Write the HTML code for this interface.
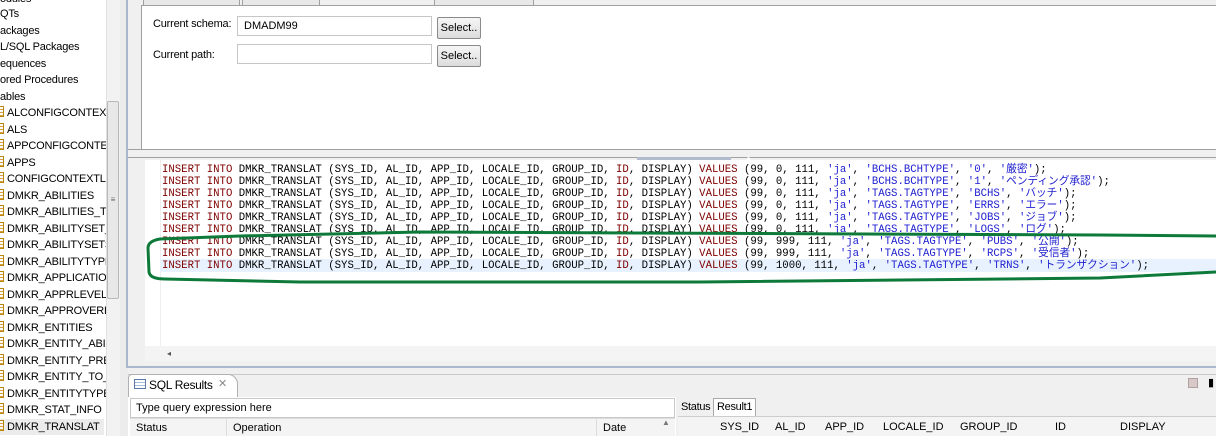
<!DOCTYPE html>
<html><head><meta charset="utf-8"><style>
*{margin:0;padding:0;box-sizing:border-box}
body{width:1216px;height:436px;overflow:hidden;background:#f0f0f0;position:relative;font-family:"Liberation Sans","Noto Sans CJK JP",sans-serif;font-size:11px;color:#000}
.abs{position:absolute}
.li{position:absolute;left:0;height:16px;line-height:16px;font-size:11px;letter-spacing:-0.2px;white-space:nowrap}
.ic{display:inline-block;width:6px;height:11px;border:1px solid #b8860b;background:repeating-linear-gradient(#fff 0 2px,#d9a040 2px 3px);vertical-align:-1px;margin-right:3px;margin-left:-2px}
.code{position:absolute;left:162px;font-family:"Liberation Mono","Noto Sans CJK JP",monospace;font-size:10.67px;line-height:12px;white-space:pre;color:#000}
.k{color:#7f0000}.s{color:#2020d0}
.btn{position:absolute;width:44px;height:22px;border:1px solid #8a8a8a;border-radius:2px;background:linear-gradient(#f6f6f6,#dcdcdc);font-size:11px;line-height:20px;text-align:center}
.inp{position:absolute;height:20px;border:1px solid #c6c6c6;background:#fff;font-size:11px;line-height:18px;padding-left:6px}
</style></head><body>
<div class="abs" style="left:0;top:0;width:106px;height:436px;background:#fff;overflow:hidden">
<div class="li" style="top:-9px">odules</div>
<div class="li" style="top:6px">QTs</div>
<div class="li" style="top:23px">ackages</div>
<div class="li" style="top:39px">L/SQL Packages</div>
<div class="li" style="top:56px">equences</div>
<div class="li" style="top:72px">ored Procedures</div>
<div class="li" style="top:89px">ables</div>
<div class="li" style="top:105px"><span class="ic"></span>ALCONFIGCONTEXT</div>
<div class="li" style="top:122px"><span class="ic"></span>ALS</div>
<div class="li" style="top:138px"><span class="ic"></span>APPCONFIGCONTEXT</div>
<div class="li" style="top:155px"><span class="ic"></span>APPS</div>
<div class="li" style="top:171px"><span class="ic"></span>CONFIGCONTEXTLOC</div>
<div class="li" style="top:188px"><span class="ic"></span>DMKR_ABILITIES</div>
<div class="li" style="top:204px"><span class="ic"></span>DMKR_ABILITIES_TRA</div>
<div class="li" style="top:221px"><span class="ic"></span>DMKR_ABILITYSET_AB</div>
<div class="li" style="top:237px"><span class="ic"></span>DMKR_ABILITYSETS</div>
<div class="li" style="top:254px"><span class="ic"></span>DMKR_ABILITYTYPES</div>
<div class="li" style="top:270px"><span class="ic"></span>DMKR_APPLICATIONS</div>
<div class="li" style="top:287px"><span class="ic"></span>DMKR_APPRLEVELSET</div>
<div class="li" style="top:303px"><span class="ic"></span>DMKR_APPROVERLEV</div>
<div class="li" style="top:320px"><span class="ic"></span>DMKR_ENTITIES</div>
<div class="li" style="top:336px"><span class="ic"></span>DMKR_ENTITY_ABILI</div>
<div class="li" style="top:353px"><span class="ic"></span>DMKR_ENTITY_PREF</div>
<div class="li" style="top:369px"><span class="ic"></span>DMKR_ENTITY_TO_E</div>
<div class="li" style="top:386px"><span class="ic"></span>DMKR_ENTITYTYPE_</div>
<div class="li" style="top:402px"><span class="ic"></span>DMKR_STAT_INFO</div>
<div class="li" style="top:419px;background:#ececec;width:104px"><span class="ic"></span>DMKR_TRANSLAT</div>
</div>
<div class="abs" style="left:106px;top:0;width:14px;height:436px;background:#f2f2f2;border-left:1px solid #e0e0e0"></div>
<div class="abs" style="left:107px;top:101px;width:12px;height:198px;background:#e8e8e8;border:1px solid #b8b8b8;border-radius:2px;text-align:center;line-height:196px;font-size:8px;color:#666">≡</div>
<div class="abs" style="left:120px;top:0;width:8px;height:436px;background:#ececec"></div>
<div class="abs" style="left:126px;top:0;width:2px;height:368px;background:#a9b8cc"></div>
<div class="abs" style="left:128px;top:0;width:1088px;height:155px;background:#f0f0f0"></div>
<div class="abs" style="left:141px;top:5px;width:1075px;height:145px;background:#fff;border:1px solid #a0a0a0;border-right:none"></div>
<div class="abs" style="left:143px;top:0;width:97px;height:6px;border:1px solid #a0a0a0;border-top:none;background:#e8e8e8"></div>
<div class="abs" style="left:242px;top:0;width:78px;height:6px;border:1px solid #a0a0a0;border-top:none;background:#e8e8e8"></div>
<div class="abs" style="left:434px;top:0;width:100px;height:6px;border:1px solid #a0a0a0;border-top:none;background:#e8e8e8"></div>
<div class="abs" style="left:153px;top:18px;font-size:11px;letter-spacing:-0.2px">Current schema:</div>
<div class="inp" style="left:237px;top:16px;width:195px">DMADM99</div>
<div class="btn" style="left:437px;top:17px">Select..</div>
<div class="abs" style="left:153px;top:49px;font-size:11px;letter-spacing:-0.2px">Current path:</div>
<div class="inp" style="left:237px;top:44px;width:195px"></div>
<div class="btn" style="left:437px;top:45px">Select..</div>
<div class="abs" style="left:128px;top:149px;width:1088px;height:1px;background:#a0a0a0"></div>
<div class="abs" style="left:128px;top:157px;width:1088px;height:1px;background:#a0a0a0"></div>
<div class="abs" style="left:637px;top:157px;width:94px;height:4px;background:#b0bccc"></div>
<div class="abs" style="left:745px;top:155px;font-size:7px;color:#fff">▲</div>
<div class="abs" style="left:145px;top:160px;width:1071px;height:186px;background:#fff"></div>
<div class="abs" style="left:160px;top:160px;width:1px;height:186px;background:#eee"></div>
<div class="abs" style="left:160px;top:259px;width:1056px;height:13px;background:#e8f2fe"></div>
<div class="code" style="top:164px"><span class="k">INSERT INTO</span> DMKR_TRANSLAT (SYS_ID, AL_ID, APP_ID, LOCALE_ID, GROUP_ID, <span class="k">ID</span>, DISPLAY) <span class="k">VALUES</span> (99, 0, 111, <span class="s">'ja'</span>, <span class="s">'BCHS.BCHTYPE'</span>, <span class="s">'0'</span>, <span class="s">'厳密'</span>);
<span class="k">INSERT INTO</span> DMKR_TRANSLAT (SYS_ID, AL_ID, APP_ID, LOCALE_ID, GROUP_ID, <span class="k">ID</span>, DISPLAY) <span class="k">VALUES</span> (99, 0, 111, <span class="s">'ja'</span>, <span class="s">'BCHS.BCHTYPE'</span>, <span class="s">'1'</span>, <span class="s">'ペンディング承認'</span>);
<span class="k">INSERT INTO</span> DMKR_TRANSLAT (SYS_ID, AL_ID, APP_ID, LOCALE_ID, GROUP_ID, <span class="k">ID</span>, DISPLAY) <span class="k">VALUES</span> (99, 0, 111, <span class="s">'ja'</span>, <span class="s">'TAGS.TAGTYPE'</span>, <span class="s">'BCHS'</span>, <span class="s">'バッチ'</span>);
<span class="k">INSERT INTO</span> DMKR_TRANSLAT (SYS_ID, AL_ID, APP_ID, LOCALE_ID, GROUP_ID, <span class="k">ID</span>, DISPLAY) <span class="k">VALUES</span> (99, 0, 111, <span class="s">'ja'</span>, <span class="s">'TAGS.TAGTYPE'</span>, <span class="s">'ERRS'</span>, <span class="s">'エラー'</span>);
<span class="k">INSERT INTO</span> DMKR_TRANSLAT (SYS_ID, AL_ID, APP_ID, LOCALE_ID, GROUP_ID, <span class="k">ID</span>, DISPLAY) <span class="k">VALUES</span> (99, 0, 111, <span class="s">'ja'</span>, <span class="s">'TAGS.TAGTYPE'</span>, <span class="s">'JOBS'</span>, <span class="s">'ジョブ'</span>);
<span class="k">INSERT INTO</span> DMKR_TRANSLAT (SYS_ID, AL_ID, APP_ID, LOCALE_ID, GROUP_ID, <span class="k">ID</span>, DISPLAY) <span class="k">VALUES</span> (99, 0, 111, <span class="s">'ja'</span>, <span class="s">'TAGS.TAGTYPE'</span>, <span class="s">'LOGS'</span>, <span class="s">'ログ'</span>);
<span class="k">INSERT INTO</span> DMKR_TRANSLAT (SYS_ID, AL_ID, APP_ID, LOCALE_ID, GROUP_ID, <span class="k">ID</span>, DISPLAY) <span class="k">VALUES</span> (99, 999, 111, <span class="s">'ja'</span>, <span class="s">'TAGS.TAGTYPE'</span>, <span class="s">'PUBS'</span>, <span class="s">'公開'</span>);
<span class="k">INSERT INTO</span> DMKR_TRANSLAT (SYS_ID, AL_ID, APP_ID, LOCALE_ID, GROUP_ID, <span class="k">ID</span>, DISPLAY) <span class="k">VALUES</span> (99, 999, 111, <span class="s">'ja'</span>, <span class="s">'TAGS.TAGTYPE'</span>, <span class="s">'RCPS'</span>, <span class="s">'受信者'</span>);
<span class="k">INSERT INTO</span> DMKR_TRANSLAT (SYS_ID, AL_ID, APP_ID, LOCALE_ID, GROUP_ID, <span class="k">ID</span>, DISPLAY) <span class="k">VALUES</span> (99, 1000, 111, <span class="s">'ja'</span>, <span class="s">'TAGS.TAGTYPE'</span>, <span class="s">'TRNS'</span>, <span class="s">'トランザクション'</span>);</div>
<svg class="abs" style="left:0;top:0" width="1216" height="436"><path d="M1216 236 L1100 235 L420 232 L240 236 L160 239 Q148 241 148 248 L149 272 Q150 279 165 279 L300 282 L700 282 L1100 278 L1216 272" fill="none" stroke="#0e7a3a" stroke-width="3"/></svg>
<div class="abs" style="left:145px;top:346px;width:1071px;height:15px;background:#f4f4f4"></div>
<div class="abs" style="left:167px;top:349px;font-size:8px;color:#555">◂</div>
<div class="abs" style="left:128px;top:366px;width:1088px;height:2px;background:#a9b8cc"></div>
<div class="abs" style="left:128px;top:374px;width:1088px;height:1px;background:#c8c8c8"></div>
<div class="abs" style="left:128px;top:374px;width:110px;height:24px;background:#fff;border:1px solid #b0b0b0;border-bottom:none;border-radius:4px 10px 0 0"></div>
<div class="abs" style="left:134px;top:379px;width:12px;height:10px;border:1px solid #5a7aa8;background:repeating-linear-gradient(#fff 0 2px,#a8c0e0 2px 3px)"></div>
<div class="abs" style="left:149px;top:378px;font-size:12px;letter-spacing:-0.3px">SQL Results</div>
<div class="abs" style="left:218px;top:377px;font-size:11px;color:#888">✕</div>
<div class="abs" style="left:1188px;top:378px;width:10px;height:10px;background:#d8c8c8;border:1px solid #b0a0a0"></div>
<div class="abs" style="left:1208px;top:376px;font-size:11px">▮</div>
<div class="abs" style="left:128px;top:397px;width:1088px;height:39px;background:#fff"></div>
<div class="abs" style="left:130px;top:398px;width:545px;height:20px;border:1px solid #c8c8c8;background:#fff;font-size:11px;line-height:18px;padding-left:5px">Type query expression here</div>
<div class="abs" style="left:130px;top:418px;width:545px;height:18px;background:#f4f4f4;border-top:1px solid #ddd"></div>
<div class="abs" style="left:136px;top:422px;font-size:11px">Status</div>
<div class="abs" style="left:226px;top:418px;width:1px;height:18px;background:#ddd"></div>
<div class="abs" style="left:233px;top:422px;font-size:11px">Operation</div>
<div class="abs" style="left:596px;top:418px;width:1px;height:18px;background:#ddd"></div>
<div class="abs" style="left:603px;top:422px;font-size:11px">Date</div>
<div class="abs" style="left:662px;top:418px;font-size:8px;color:#777">▲</div>
<div class="abs" style="left:676px;top:397px;width:540px;height:39px;background:#f0f0f0"></div>
<div class="abs" style="left:681px;top:401px;font-size:11px;letter-spacing:-0.3px">Status</div>
<div class="abs" style="left:713px;top:398px;width:43px;height:18px;background:#fff;border:1px solid #aaa;border-bottom:none;font-size:11px;letter-spacing:-0.3px;padding-left:3px;line-height:17px">Result1</div>
<div class="abs" style="left:678px;top:416px;width:538px;height:20px;background:#f4f4f4;border-top:1px solid #ccc"></div>
<div class="abs" style="left:720px;top:421px;font-size:11px">SYS_ID</div>
<div class="abs" style="left:775px;top:421px;font-size:11px">AL_ID</div>
<div class="abs" style="left:825px;top:421px;font-size:11px">APP_ID</div>
<div class="abs" style="left:883px;top:421px;font-size:11px">LOCALE_ID</div>
<div class="abs" style="left:960px;top:421px;font-size:11px">GROUP_ID</div>
<div class="abs" style="left:1055px;top:421px;font-size:11px">ID</div>
<div class="abs" style="left:1120px;top:421px;font-size:11px">DISPLAY</div>
</body></html>
